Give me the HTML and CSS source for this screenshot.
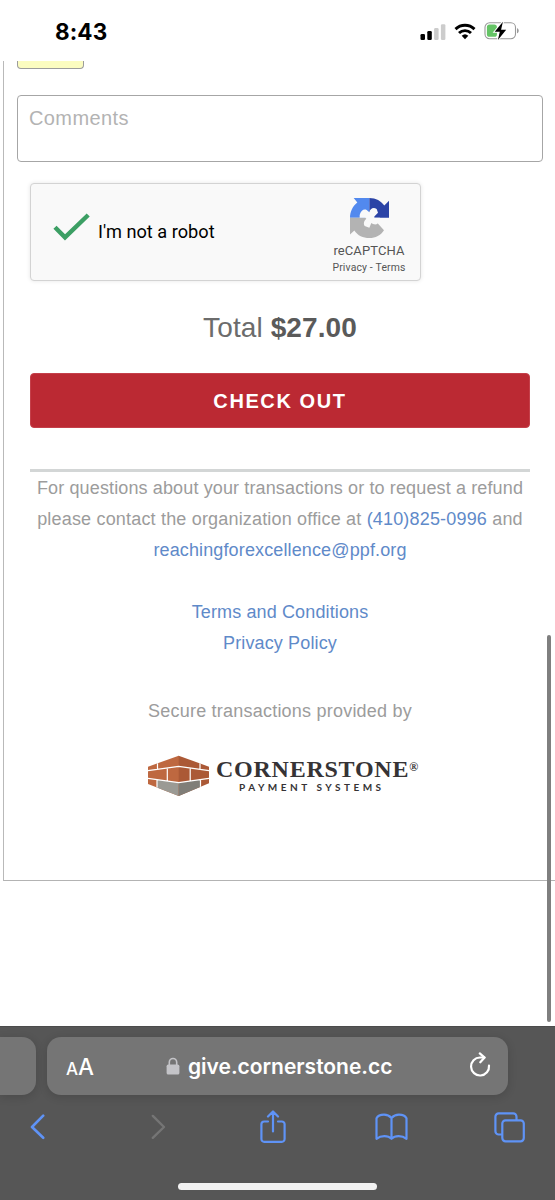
FILE: index.html
```html
<!DOCTYPE html>
<html lang="en">
<head>
<meta charset="utf-8">
<title>Check out</title>
<link rel="stylesheet" href="styles.css">
</head>
<body>
<div class="phone">
  <header class="status">
    <span class="clock">8:43</span>
    <div class="indicators">
      <svg class="signal" width="26" height="18" viewBox="0 0 26 18">
        <rect x="0.5" y="11" width="4.5" height="6" rx="1.3" fill="#000"/>
        <rect x="7.3" y="8" width="4.5" height="9" rx="1.3" fill="#000"/>
        <rect x="14.1" y="5" width="4.5" height="12" rx="1.3" fill="#ccc"/>
        <rect x="20.9" y="1.3" width="4.5" height="15.7" rx="1.3" fill="#ccc"/>
      </svg>
      <svg class="wifi" width="22" height="17" viewBox="0 0 22 17">
        <g fill="none" stroke="#000" stroke-width="2.9">
          <path d="M1.5 6.1a13.7 13.7 0 0 1 19 0"/>
          <path d="M5 10a8.7 8.7 0 0 1 12 0"/>
        </g>
        <path d="M7.7 12.7a4.9 4.9 0 0 1 6.6 0L11 16.2z" fill="#000"/>
      </svg>
      <svg class="battery" width="36" height="20" viewBox="0 0 36 20">
        <rect x="1" y="1.7" width="30.5" height="16" rx="4.6" fill="#fff" stroke="#999" stroke-width="1.1"/>
        <path d="M33 7.2c2.3.6 2.3 4.4 0 5z" fill="#999"/>
        <rect x="2.9" y="3.6" width="10" height="12.2" rx="2.6" fill="#65c466"/>
        <path d="M18.9.7 10.7 10.8h5.1l-1.9 8.1 8.3-10.2h-5.1z" fill="#000" stroke="#fff" stroke-width="2" paint-order="stroke"/>
      </svg>
    </div>
  </header>

  <main class="page">
    <section class="form">
      <div class="field-end"></div>
      <div class="comments">Comments</div>
      <div class="inner">
        <div class="captcha">
          <svg class="check" width="38" height="28" viewBox="0 0 38 28">
            <path d="M2 14.2 12 24.3 35.2 2" fill="none" stroke="#3c9f64" stroke-width="4.4"/>
          </svg>
          <span class="robot">I'm not a robot</span>
          <div class="brand">
            <svg width="39" height="40" viewBox="0 0 117 117" preserveAspectRatio="none">
              <path fill="#5289ee" d="M0 58C0 39 8 24 22 13L11 0H58V58z"/>
              <path fill="#2b43a6" d="M58 0C78 0 93 9 103 22L117 8V58H58z"/>
              <path fill="#b3b3b3" d="M0 58H58L80 71 102 94C92 109 77 117 58 117 39 117 23 110 13 95L0 107z"/>
              <path fill="#f9f9f9" d="M29 50C32 36 42 31 50 35L58 42C60 31 70 26 80 32L84 43 73 54V58H90L82 76C75 79 68 76 64 73L58 87 44 82C39 74 43 66 49 61L46 58H29z"/>
            </svg>
            <span class="brand-name">reCAPTCHA</span>
            <span class="brand-links">Privacy&nbsp;-&nbsp;Terms</span>
          </div>
        </div>
        <p class="total">Total <b>$27.00</b></p>
        <button class="checkout">CHECK OUT</button>
        <div class="notes">
          <p>For questions about your transactions or to request a refund</p>
          <p class="tracked">please contact the organization office at <a>(410)825-0996</a> and</p>
          <p><a>reachingforexcellence@ppf.org</a></p>
          <p class="gap"><a>Terms and Conditions</a></p>
          <p><a>Privacy Policy</a></p>
          <p class="secure">Secure transactions provided by</p>
        </div>
        <div class="logo">
          <svg width="62" height="42" viewBox="0 0 62 42">
            <clipPath id="block"><path d="M30.7 .7 61 11.700V28.300L30.700 41 0 29V11.700z"/></clipPath>
            <g clip-path="url(#block)">
              <path fill="#be6840" d="M0 0h31v42H0z"/>
              <path fill="#ab5936" d="M30.700 0H62v42H30.700z"/>
              <path fill="#9b9a94" d="M9 24.600 30.700 27.700V42H9z"/>
              <path fill="#807e78" d="M52.500 24.600 30.700 27.700V42h21.800z"/>
              <path d="M0 15.700 30.700 11.300 61 15.700M0 23.300 30.700 27.700 61 23.300M9 24.600V34M52.500 24.600V34M19.300 13V26M42.200 13V26M9.500 8V14.300M52 8V14.300" fill="none" stroke="#fff" stroke-width="1.200"/>
            </g>
          </svg>
          <div class="wordmark">
            <span class="name">CORNERSTONE<sup>®</sup></span>
            <span class="sub">PAYMENT SYSTEMS</span>
          </div>
        </div>
      </div>
    </section>
    <div class="scrollbar"></div>
  </main>

  <footer class="toolbar">
    <div class="tabs">
      <div class="prev-tab"></div>
      <div class="address">
        <span class="aa"><small>A</small>A</span>
        <span class="url">
          <svg width="14" height="18" viewBox="0 0 14 18">
            <path d="M3.300 8.500V5.200a3.700 3.700 0 0 1 7.400 0v3.300" fill="none" stroke="#c4c4c8" stroke-width="1.600"/>
            <rect x="0.600" y="7.600" width="12.800" height="10" rx="1.700" fill="#c4c4c8"/>
          </svg>
          <span class="host">give.cornerstone.cc</span>
        </span>
        <svg class="reload" width="22" height="26" viewBox="0 0 22 26" fill="none" stroke="#fff" stroke-width="2.200" stroke-linecap="round" stroke-linejoin="round">
          <path d="M20 13.600A9 9 0 1 1 11 5.500H15.400"/>
          <path d="M10.800 1.400 15.600 5.600 11.300 10.300"/>
        </svg>
      </div>
    </div>
    <nav class="actions">
      <svg width="15" height="26" viewBox="0 0 15 26"><path d="M13.200 1.700 2 13 13.200 23.800" fill="none" stroke="#5f93f6" stroke-width="2.600" stroke-linecap="round" stroke-linejoin="round"/></svg>
      <svg class="forward" width="15" height="26" viewBox="0 0 15 26"><path d="M1.800 1.900 13 13 1.800 23.800" fill="none" stroke="#757575" stroke-width="2.400" stroke-linecap="round" stroke-linejoin="round"/></svg>
      <svg width="26" height="34" viewBox="0 0 26 34" fill="none" stroke="#5f93f6" stroke-width="2.200" stroke-linecap="round" stroke-linejoin="round">
        <path d="M8 11.500H4.200A2.800 2.800 0 0 0 1.400 14.300V29A2.800 2.800 0 0 0 4.200 31.800H21.800A2.800 2.800 0 0 0 24.600 29V14.300A2.800 2.800 0 0 0 21.800 11.500H18M13 21.500V2M8 6.500 13 1.500 18 6.500"/>
      </svg>
      <svg width="33" height="28" viewBox="0 0 33 28" fill="none" stroke="#5f93f6" stroke-width="2.200" stroke-linecap="round" stroke-linejoin="round">
        <path d="M16.500 5C14.500 2.800 12 1.700 9 1.700 5.500 1.700 2.800 2.800 1.500 5.200V25.800C6 22.300 13 22.300 16.500 25.800 20 22.300 27 22.300 31.500 25.800V5.200C30.200 2.800 27.500 1.700 24 1.700 21 1.700 18.500 2.800 16.500 5zV25.500"/>
      </svg>
      <svg width="31" height="31" viewBox="0 0 31 31" fill="none" stroke="#5f93f6" stroke-width="2.200">
        <rect x="8.300" y="8.300" width="21.500" height="21" rx="3.200"/>
        <path d="M8.300 22.500H4.700A3.300 3.300 0 0 1 1.400 19.200V4.700A3.300 3.300 0 0 1 4.700 1.400H19.200A3.300 3.300 0 0 1 22.500 4.700V8.300"/>
      </svg>
    </nav>
    <div class="home"></div>
  </footer>
</div>
</body>
</html>
```
FILE: styles.css
```css
* { box-sizing: border-box; }
body { margin: 0; background: #fff; font-family: "Liberation Sans", Arial, sans-serif; }
p { margin: 0; white-space: nowrap; }
svg { display: block; flex: none; }
.phone { width: 555px; height: 1200px; overflow: hidden; display: flex; flex-direction: column; }

.status { height: 61px; flex: none; display: flex; justify-content: space-between; padding: 20px 35px 0 55px; }
.clock { font: 700 22.5px/24px Inter, sans-serif; letter-spacing: 0.1px; color: #000; }
.indicators { display: flex; align-items: flex-start; }
.signal { margin: 3px 8px 0 0; }
.wifi { margin: 3px 8px 0 0; }
.battery { margin-top: 1px; }

.page { position: relative; height: 965px; flex: none; overflow: hidden; padding-left: 3px; }
.form { height: 820px; width: 560px; border-left: 1px solid #b9b9b9; border-bottom: 1px solid #b3b3b3; padding-left: 13px; }
.field-end { width: 67px; height: 8px; background: #fbfcc0; border: 1px solid #9c9c9c; border-top: 0; border-radius: 0 0 4px 4px; }
.comments { width: 526px; height: 67px; margin-top: 26px; border: 1px solid #a6a6a6; border-radius: 4px; padding: 10px 11px; font-size: 20px; line-height: 24px; color: #b3b3b3; letter-spacing: 0.4px; }
.inner { width: 501px; margin: 21px 0 0 13px; }
.captcha { width: 391px; height: 98px; border: 1px solid #d3d3d3; border-radius: 4px; background: #f9f9f9; box-shadow: 0 0 4px rgba(0,0,0,.1); display: flex; }
.check { margin: 29px 0 0 22px; }
.robot { margin: 36px 0 0 7px; font: 18.2px/24px Roboto, sans-serif; color: #000; }
.brand { margin-left: auto; width: 102px; padding-top: 14px; display: flex; flex-direction: column; align-items: center; color: #555; font-family: Roboto, sans-serif; }
.brand-name { font-size: 13px; line-height: 16px; margin-top: 5px; letter-spacing: .1px; }
.brand-links { font-size: 10.4px; line-height: 14px; margin-top: 2px; letter-spacing: .15px; }
.total { width: 500px; margin-top: 30px; text-align: center; font-size: 28px; line-height: 34px; color: #6c6c6c; letter-spacing: .1px; }
.total b { color: #5a5a5a; }
.checkout { display: block; width: 500px; height: 55px; margin-top: 28px; border: 1px solid #c4404a; border-radius: 4px; background: #bb2933; color: #fff; font: 700 20px/24px "Liberation Sans", sans-serif; letter-spacing: 1.6px; padding: 1px 0 0; }
.notes { width: 500px; margin-top: 41px; border-top: 3px solid #d3d6d6; font-size: 18px; line-height: 31px; color: #9c9c9c; text-align: center; padding-top: 1px; letter-spacing: .13px; }
.notes a { color: #5f8ac9; }
.tracked { letter-spacing: .18px; }
.gap { margin-top: 31px; }
.secure { margin-top: 37px; letter-spacing: .22px; }
.logo { display: flex; margin: 28px 0 0 118px; }
.wordmark { width: 210px; padding-left: 6px; display: flex; flex-direction: column; color: #363335; white-space: nowrap; }
.name { font: 700 24px/26px "Liberation Serif", serif; letter-spacing: .75px; margin-top: 1px; }
.name sup { font-size: 12px; line-height: 0; vertical-align: 6px; }
.sub { font: 700 10px/12px Lato, sans-serif; letter-spacing: 3.5px; margin-left: 23px; margin-top: -1px; }
.scrollbar { position: absolute; left: 547px; top: 574px; width: 4px; height: 387px; border-radius: 2px; background: #7f7f7f; }

.toolbar { height: 174px; flex: none; background: #565656; border-top: 1px solid #4b4b4b; display: flex; flex-direction: column; overflow: hidden; }
.tabs { display: flex; gap: 11px; margin-top: 10px; height: 58px; }
.prev-tab { width: 36px; background: #757575; border-radius: 0 14px 14px 0; box-shadow: 0 2px 10px rgba(0,0,0,.14); }
.address { width: 461px; background: #757575; border-radius: 14px; box-shadow: 0 2px 10px rgba(0,0,0,.14); display: flex; color: #fff; font-family: Inter, sans-serif; font-weight: 500; }
.aa { margin: 16px 0 0 19px; width: 100px; font-size: 22.5px; line-height: 28px; }
.aa small { font-size: 17px; }
.url { display: flex; width: 227px; padding-top: 16px; gap: 8px; }
.url svg { margin-top: 4px; }
.host { font-size: 21px; font-weight: 600; line-height: 28px; letter-spacing: -.02px; }
.reload { margin: 15px 0 0 76px; }
.actions { width: 590px; height: 60px; margin-left: -22px; margin-top: 2px; display: grid; grid-template-columns: repeat(5, 118px); justify-items: center; align-items: center; }
.forward { margin-left: 6px; }
.home { width: 199px; height: 7px; border-radius: 4px; background: #f2f2f2; margin: 26px 0 0 178px; }
```
